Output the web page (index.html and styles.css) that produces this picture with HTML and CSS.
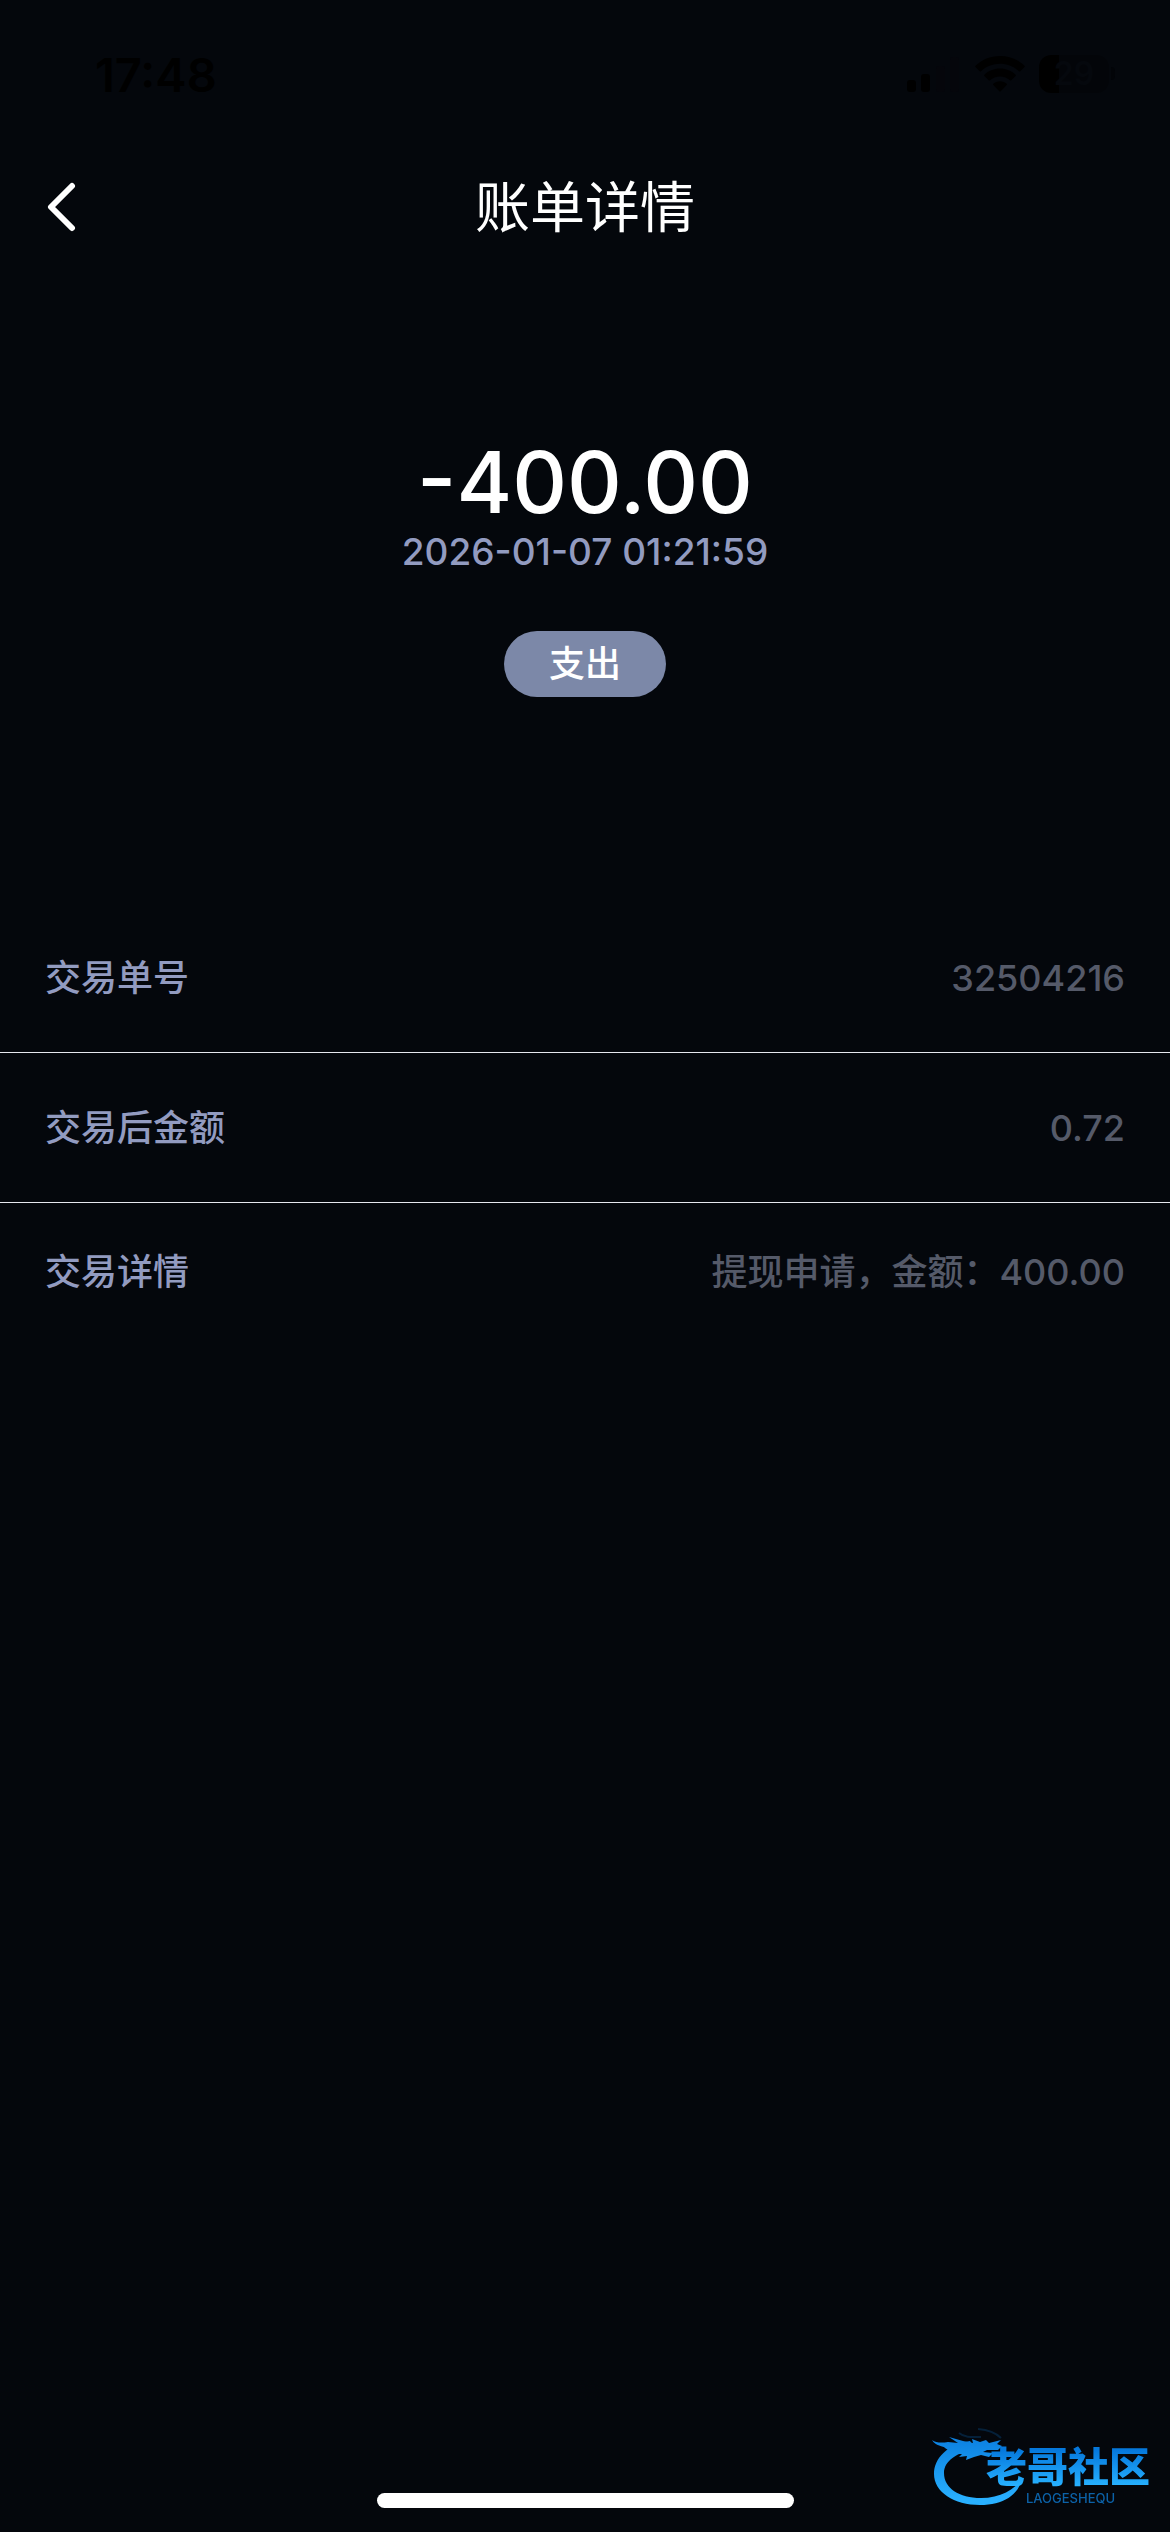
FILE: index.html
```html
<!DOCTYPE html>
<html lang="zh-CN">
<head>
    <meta charset="UTF-8">
    <meta name="viewport" content="width=device-width, initial-scale=1.0">
    <title>账单详情</title>
    <link rel="stylesheet" href="styles.css">
</head>
<body>
    <div class="status-bar">
        <span class="time">17:48</span>
        <div class="status-icons">
            <svg class="signal" width="54" height="36" viewBox="0 0 54 36" aria-hidden="true">
                <rect x="0" y="24" width="9" height="12" rx="3"/>
                <rect x="14" y="18" width="9" height="18" rx="3"/>
                <rect class="dim" x="29" y="10" width="9" height="26" rx="3"/>
                <rect class="dim" x="43" y="1" width="9" height="35" rx="3"/>
            </svg>
            <svg class="wifi" width="50" height="37" viewBox="0 0 50 37" aria-hidden="true">
                <path d="M25 0C15.500 0 6.800 3.700.500 9.800c-.400.400-.400.900 0 1.300l4.200 4.200c.400.400.900.400 1.300 0C11 10.600 17.600 7.800 25 7.800s14 2.800 19 7.500c.400.400.900.400 1.300 0l4.200-4.200c.400-.400.400-.900 0-1.300C43.200 3.700 34.500 0 25 0z"/>
                <path d="M25 12.600c-6 0-11.500 2.300-15.600 6.100-.400.400-.400.900 0 1.300l4.300 4.300c.300.300.900.400 1.300 0 2.700-2.400 6.200-3.900 10-3.900s7.300 1.500 10 3.900c.400.400 1 .300 1.300 0l4.300-4.300c.400-.400.400-.900 0-1.300-4.100-3.800-9.600-6.100-15.600-6.100z"/>
                <path d="M25 25.300c-2.600 0-4.900.900-6.700 2.400-.400.300-.400.900 0 1.300l6 6.300c.400.400 1 .400 1.400 0l6-6.300c.400-.400.400-1 0-1.300-1.800-1.500-4.100-2.400-6.700-2.400z"/>
            </svg>
            <div class="battery"><span>29</span></div>
        </div>
    </div>

    <header class="nav">
        <button class="back" type="button" aria-label="返回">
            <svg width="30" height="50" viewBox="0 0 30 50" aria-hidden="true">
                <path d="M25 4 4 25 25 46"/>
            </svg>
        </button>
        <h1>账单详情</h1>
    </header>

    <main>
        <section class="summary">
            <div class="amount">-400.00</div>
            <time class="date" datetime="2026-01-07T01:21:59">2026-01-07 01:21:59</time>
            <span class="tag">支出</span>
        </section>

        <dl class="details">
            <div class="row">
                <dt>交易单号</dt>
                <dd>32504216</dd>
            </div>
            <div class="row">
                <dt>交易后金额</dt>
                <dd>0.72</dd>
            </div>
            <div class="row">
                <dt>交易详情</dt>
                <dd>提现申请，金额：400.00</dd>
            </div>
        </dl>
    </main>

    <div class="home-indicator"></div>

    <svg class="watermark" width="230" height="84" viewBox="0 0 230 84" role="img" aria-label="老哥社区">
        <defs>
            <linearGradient id="blue" gradientUnits="userSpaceOnUse" x1="0" y1="12" x2="0" y2="76">
                <stop offset="0" stop-color="#0a7fe0"/>
                <stop offset="1" stop-color="#29b0ff"/>
            </linearGradient>
            <linearGradient id="word" gradientUnits="userSpaceOnUse" x1="0" y1="26" x2="0" y2="62">
                <stop offset="0" stop-color="#0578dc"/>
                <stop offset="1" stop-color="#27b1ff"/>
            </linearGradient>
        </defs>
        <!-- dragon body and head -->
        <path fill="url(#blue)" d="M40 17C18 20 4 34 4 50c0 18 20 31 46 31 23 0 39-10 42-27-7 12-22 20-41 20C29 74 14 64 14 49c0-12 13-21 32-24z"/>
        <path fill="url(#blue)" d="M2 16c4 3 10 3 16 2l10 1-9-6 14 4 10 2-1-4 8 3 6-2 3 3 12-3-4 4 5 2-4 4-11 0-4 2 10 1-4 4-8-2-7 2-8 3 1-4-8 1 3-3-8 0-9-6C14 22 5 22 2 16z"/>
        <path class="whisker" d="M29 9c6 5 14 4 22 4M48 5c12 1 18 4 23 9"/>
        <text class="word" x="56" y="58">老哥社区</text>
        <text class="latin" x="96" y="79">LAOGESHEQU</text>
    </svg>
</body>
</html>
```
FILE: styles.css
```css
* {
    box-sizing: border-box;
    margin: 0;
    padding: 0;
}
body {
    font-family: Inter, "Noto Sans CJK SC", sans-serif;
    background-color: #04070c;
    color: #fff;
    min-height: 100vh;
    display: flex;
    flex-direction: column;
}
.status-bar {
    display: flex;
    justify-content: space-between;
    align-items: center;
    height: 148px;
    padding: 0 61px 0 95px;
    color: #000;
}
.time {
    font-size: 47px;
    font-weight: 600;
}
.status-icons {
    display: flex;
    align-items: center;
    gap: 14px;
}
.status-icons .dim {
    fill: #05060b;
}
.battery {
    position: relative;
    width: 70px;
    height: 38px;
    border-radius: 12px;
    background: linear-gradient(to right, #000 20px, #030509 20px);
    color: #05080d;
    font-size: 32px;
    font-weight: 600;
    line-height: 38px;
    text-align: center;
}
.battery::after {
    content: "";
    position: absolute;
    right: -6px;
    top: 12px;
    width: 4px;
    height: 13px;
    border-radius: 0 4px 4px 0;
    background-color: #020408;
}
.nav {
    display: grid;
    grid-template-columns: 1fr auto 1fr;
    align-items: center;
    height: 118px;
    padding: 0 47px;
}
.back {
    width: 60px;
    height: 60px;
    border: none;
    background: none;
    cursor: pointer;
    display: flex;
    align-items: center;
}
.back path {
    fill: none;
    stroke: #fff;
    stroke-width: 6;
    stroke-linecap: round;
    stroke-linejoin: round;
}
h1 {
    font-size: 55px;
    font-weight: 400;
    line-height: 80px;
}
main {
    flex: 1;
}
.summary {
    display: flex;
    flex-direction: column;
    align-items: center;
    padding: 166px 45px 206px;
}
.amount {
    font-size: 85px;
    font-weight: 500;
    line-height: 102px;
}
.date {
    color: #929bc0;
    font-size: 37px;
    font-weight: 500;
    line-height: 36px;
}
.tag {
    margin-top: 61px;
    padding: 0 45px;
    border-radius: 33px;
    background-color: #7c88a8;
    font-size: 36px;
    font-weight: 500;
    line-height: 66px;
}
.row {
    display: flex;
    justify-content: space-between;
    align-items: center;
    gap: 40px;
    padding: 49px 45px 47px;
    border-bottom: 1px solid #e6e8ee;
    font-size: 36px;
    font-weight: 500;
    line-height: 53px;
}
.row:last-child {
    padding-top: 43px;
    border-bottom: none;
}
dt {
    color: #929bc0;
}
dd {
    color: #555a69;
    text-align: right;
}
.home-indicator {
    width: 36%;
    max-width: 417px;
    height: 15px;
    margin: 0 auto 24px;
    border-radius: 8px;
    background-color: #fff;
}
/* site logo, stays over the page */
.watermark {
    position: fixed;
    right: 10px;
    bottom: 24px;
}
.watermark .whisker {
    fill: none;
    stroke: #052039;
    stroke-width: 2;
}
.watermark .word {
    fill: url(#word);
    font-size: 41px;
    font-weight: 900;
}
.watermark .latin {
    fill: #0c62a8;
    font-size: 13px;
    font-weight: 500;
}
```
